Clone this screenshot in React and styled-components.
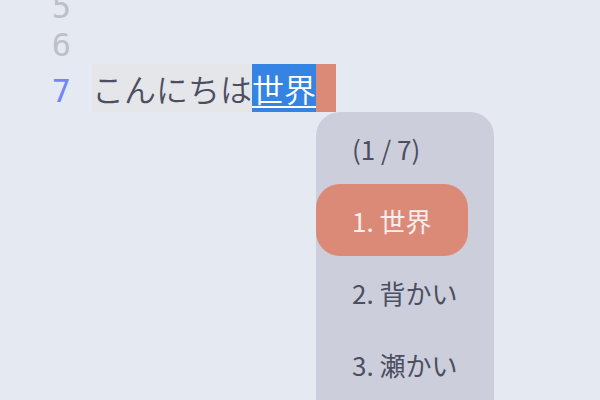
import React from 'react';
import styled, { createGlobalStyle } from 'styled-components';

const GlobalStyle = createGlobalStyle`
  * { box-sizing: border-box; }
  body {
    margin: 0;
    overflow: hidden;
    background: #e5e9f1;
    color: #4c4f62;
    font-family: "Noto Sans CJK JP", sans-serif;
  }
`;

const Editor = styled.main`
  height: 100vh;
  overflow: hidden;
  display: flex;
  flex-direction: column;
`;

const Lines = styled.div`
  display: flex;
  flex-direction: column;
  margin-top: -12px;
`;

const Line = styled.div`
  display: grid;
  grid-template-columns: 71px 1fr;
  column-gap: 21px;
  height: ${({ $current }) => ($current ? 48 : 38)}px;
  font-size: 32px;
`;

const LineNumber = styled.span`
  font-family: "DejaVu Sans Mono", monospace;
  line-height: ${({ $current }) => ($current ? 54 : 38)}px;
  text-align: right;
  color: ${({ $current }) => ($current ? '#7287f5' : '#bcc0c9')};
`;

const Code = styled.div`
  display: flex;
  height: 48px;
  white-space: nowrap;
  font-weight: 350;
  line-height: 48px;
`;

const Typed = styled.span`
  background: #e4e6ea;
`;

const Composing = styled.span`
  color: #fff;
  background: linear-gradient(#fff, #fff) 0 42px / 100% 2px no-repeat #3584e4;
`;

const Cursor = styled.span`
  position: relative;
  width: 20px;
  background: #dc8a78;
`;

const Popup = styled.div`
  position: absolute;
  top: 100%;
  left: 0;
  min-width: 178px;
  min-height: 320px;
  display: flex;
  flex-direction: column;
  align-items: flex-start;
  border-radius: 24px;
  background: #cccfdb;
  color: #4c4f62;
  font-size: 26px;
  font-weight: 400;
`;

const PageCount = styled.div`
  height: 72px;
  padding: 0 36px;
  line-height: 74px;
`;

const Candidates = styled.div`
  display: flex;
  flex-direction: column;
  align-items: flex-start;
`;

const Candidate = styled.button`
  height: 72px;
  padding: 2px 36px 0;
  border: 0;
  border-radius: 24px;
  background: ${({ $selected }) => ($selected ? '#dc8a78' : 'transparent')};
  color: ${({ $selected }) => ($selected ? '#f7eeee' : 'inherit')};
  font: inherit;
  line-height: 70px;
  white-space: nowrap;
`;

const candidates = ['世界', '背かい', '瀬かい'];

export default function App() {
  return (
    <>
      <GlobalStyle />
      <Editor lang="ja">
        <Lines>
          <Line><LineNumber>5</LineNumber></Line>
          <Line><LineNumber>6</LineNumber></Line>
          <Line $current>
            <LineNumber $current>7</LineNumber>
            <Code>
              <Typed>こんにちは</Typed>
              <Composing>世界</Composing>
              <Cursor>
                <Popup>
                  <PageCount>(1 / 7)</PageCount>
                  <Candidates>
                    {candidates.map((text, i) => (
                      <Candidate key={text} type="button" $selected={i === 0}>
                        {i + 1}. {text}
                      </Candidate>
                    ))}
                  </Candidates>
                </Popup>
              </Cursor>
            </Code>
          </Line>
        </Lines>
      </Editor>
    </>
  );
}
